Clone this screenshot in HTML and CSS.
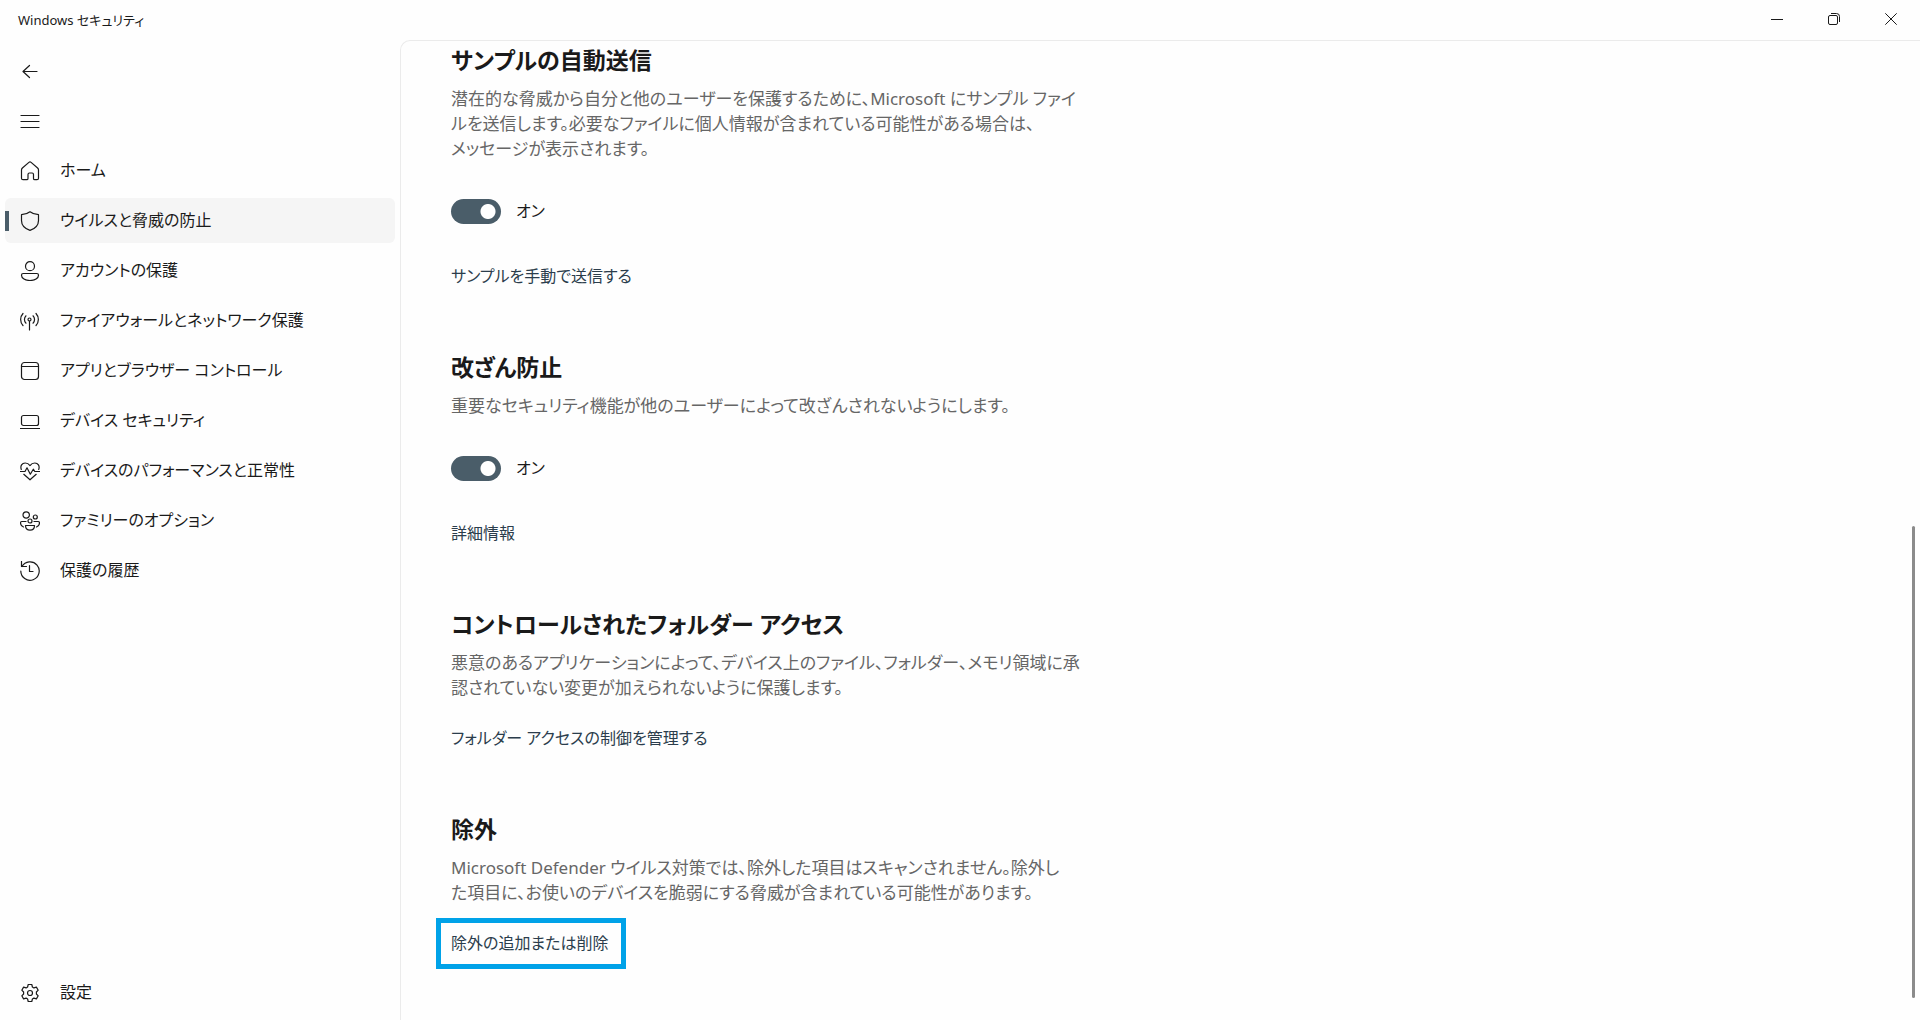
FILE: index.html
```html
<!DOCTYPE html>
<html lang="ja">
<head>
<meta charset="utf-8">
<meta name="viewport" content="width=device-width, initial-scale=1">
<title>Windows セキュリティ</title>
<link rel="stylesheet" href="styles.css">
</head>
<body>
<header class="titlebar">
  <span class="titlebar-name">Windows セキュリティ</span>
  <div class="window-controls">
    <button type="button" class="window-button" aria-label="最小化"><svg viewBox="0 0 12 12" class="window-icon"><path d="M0 6.5h12"/></svg></button>
    <button type="button" class="window-button" aria-label="元に戻す"><svg viewBox="0 0 12 12" class="window-icon"><rect x=".5" y="2.5" width="9" height="9" rx="1.5"/><path d="M3 .5h5.5a3 3 0 0 1 3 3V9"/></svg></button>
    <button type="button" class="window-button" aria-label="閉じる"><svg viewBox="0 0 12 12" class="window-icon"><path d="M.3.3l11.4 11.4M11.7.3.3 11.7"/></svg></button>
  </div>
</header>
<div class="shell">
  <nav class="sidebar">
    <button type="button" class="nav-item" aria-label="戻る"><svg viewBox="0 0 20 20" class="icon"><path d="M17 10.500H3M9.500 4.500 3 10.500l6.500 6"/></svg></button>
    <button type="button" class="nav-item" aria-label="メニュー"><svg viewBox="0 0 20 20" class="icon"><path d="M1 4.500h18M1 10.500h18M1 16.500h18"/></svg></button>
    <a href="#" class="nav-item"><svg viewBox="0 0 20 20" class="icon"><path d="M1.500 9 Q1.500 7.800 2.400 7L8.900 1.400q1.100-.9 2.200 0L17.600 7q.9.800.9 2v8.200q0 1.500-1.500 1.500h-2.200q-1.300 0-1.300-1.300v-4q0-1.400-1.400-1.400H9.400q-1.400 0-1.400 1.400v4q0 1.300-1.300 1.300H3q-1.500 0-1.500-1.500Z"/></svg>ホーム</a>
    <a href="#" class="nav-item is-selected" aria-current="page"><svg viewBox="0 0 20 20" class="icon"><path d="M10 .8C12.400 2.700 15 3.600 18.500 3.700V9.500C18.500 14 15.500 17.500 10 19.400 4.500 17.500 1.500 14 1.500 9.500V3.700C5 3.600 7.600 2.700 10 .8Z"/></svg>ウイルスと脅威の防止</a>
    <a href="#" class="nav-item"><svg viewBox="0 0 20 20" class="icon"><circle cx="10" cy="5.200" r="4.500"/><path d="M3.200 12.500h13.600q1.700 0 1.700 1.700c0 3.200-3.700 5.300-8.500 5.300s-8.500-2.100-8.500-5.300q0-1.700 1.700-1.700Z"/></svg>アカウントの保護</a>
    <a href="#" class="nav-item"><svg viewBox="0 0 20 20" class="icon"><circle cx="9.500" cy="8.500" r="1.500"/><path d="M9.500 10v9M3 2.500a8.800 8.800 0 0 0 0 12M6 4.800a5.200 5.200 0 0 0 0 7.400M16 2.500a8.800 8.800 0 0 1 0 12M13 4.800a5.200 5.200 0 0 1 0 7.400"/></svg>ファイアウォールとネットワーク保護</a>
    <a href="#" class="nav-item"><svg viewBox="0 0 20 20" class="icon"><rect x="1.500" y="1.500" width="17" height="17" rx="3"/><path d="M1.500 5.500h17"/></svg>アプリとブラウザー コントロール</a>
    <a href="#" class="nav-item"><svg viewBox="0 0 20 20" class="icon"><rect x="1.500" y="4.500" width="17" height="10" rx="2"/><path d="M0 17.500h20"/></svg>デバイス セキュリティ</a>
    <a href="#" class="nav-item"><svg viewBox="0 0 20 20" class="icon"><path d="M1.300 8.500C0 5 2 2 5.200 2 7.500 2 9 3.200 10 4.600 11 3.200 12.500 2 14.800 2 18 2 20 5 18.700 8.500M0 10.500h5l2-3.700 3.300 6.400 3-5 1.500 2.300H20M3.800 13.300 10 18.800l6.200-5.500"/></svg>デバイスのパフォーマンスと正常性</a>
    <a href="#" class="nav-item"><svg viewBox="0 0 20 20" class="icon"><circle cx="6.200" cy="4" r="3.200"/><circle cx="15.300" cy="6" r="2"/><circle cx="10" cy="10" r="2"/><path d="M5.500 14.500h9c0 3-1.700 4.700-4.500 4.700s-4.500-1.700-4.500-4.700ZM6 10.500H2Q.5 10.500.5 12c0 2 1 3.200 3 4M14 10.500h4q1.500 0 1.500 1.500c0 2-1 3.200-3 4"/></svg>ファミリーのオプション</a>
    <a href="#" class="nav-item"><svg viewBox="0 0 20 20" class="icon"><path d="M1.500.5v5h5M2 5.500A9.200 9.200 0 1 1 .8 10M9.500 4.500v6H13"/></svg>保護の履歴</a>
    <a href="#" class="nav-item nav-settings"><svg viewBox="0 0 20 20" class="icon"><circle cx="10" cy="10" r="2.500"/><path d="M8.200 1.500h3.600l.6 2.500 1.500.9 2.500-.8 1.800 3.100L16.400 9v2l1.800 1.800-1.800 3.100-2.500-.8-1.500.9-.6 2.500H8.200L7.600 16l-1.500-.9-2.500.8-1.800-3.100L3.600 11V9L1.800 7.200l1.800-3.100 2.500.8L7.600 4Z"/></svg>設定</a>
  </nav>
  <main class="content">
    <section class="section">
      <h2 class="section-title">サンプルの自動送信</h2>
      <p class="section-text">潜在的な脅威から自分と他のユーザーを保護するために、Microsoft にサンプル ファイ<br>ルを送信します。必要なファイルに個人情報が含まれている可能性がある場合は、<br>メッセージが表示されます。</p>
      <label class="toggle"><input type="checkbox" role="switch" class="toggle-input" checked>オン</label>
      <a href="#" class="section-link">サンプルを手動で送信する</a>
    </section>
    <section class="section">
      <h2 class="section-title">改ざん防止</h2>
      <p class="section-text">重要なセキュリティ機能が他のユーザーによって改ざんされないようにします。</p>
      <label class="toggle"><input type="checkbox" role="switch" class="toggle-input" checked>オン</label>
      <a href="#" class="section-link">詳細情報</a>
    </section>
    <section class="section">
      <h2 class="section-title">コントロールされたフォルダー アクセス</h2>
      <p class="section-text">悪意のあるアプリケーションによって、デバイス上のファイル、フォルダー、メモリ領域に承<br>認されていない変更が加えられないように保護します。</p>
      <a href="#" class="section-link">フォルダー アクセスの制御を管理する</a>
    </section>
    <section class="section">
      <h2 class="section-title">除外</h2>
      <p class="section-text">Microsoft Defender ウイルス対策では、除外した項目はスキャンされません。除外し<br>た項目に、お使いのデバイスを脆弱にする脅威が含まれている可能性があります。</p>
      <a href="#" class="section-link is-highlighted">除外の追加または削除</a>
    </section>
    <div class="scroll-thumb"></div>
  </main>
</div>
</body>
</html>
```
FILE: styles.css
```css
* {
  box-sizing: border-box;
}

body {
  margin: 0;
  min-height: 100vh;
  display: flex;
  flex-direction: column;
  background: #fefefe;
  color: #1a1a1a;
  font-family: "Noto Sans", "Noto Sans CJK JP", sans-serif;
  font-size: 16px;
  line-height: 25px;
  font-feature-settings: "palt";
}

button {
  border: 0;
  background: none;
  color: inherit;
  font: inherit;
}

a {
  color: inherit;
  text-decoration: none;
}

.titlebar {
  display: flex;
  justify-content: space-between;
  height: 40px;
  padding: 0 1px 0 18px;
  font-size: 13px;
  line-height: 40px;
}

.window-controls {
  display: flex;
}

.window-button {
  display: grid;
  place-items: center;
  width: 57px;
  height: 38px;
  padding: 0;
}

.window-icon {
  width: 12px;
  height: 12px;
  fill: none;
  stroke: #1a1a1a;
}

.shell {
  flex: 1;
  display: flex;
}

.sidebar {
  display: flex;
  flex-direction: column;
  gap: 5px;
  flex: 0 0 400px;
  padding: 8px 5px 5px;
}

.nav-item {
  display: flex;
  align-items: center;
  gap: 20px;
  height: 45px;
  padding: 0 15px;
  border-radius: 6px;
  white-space: nowrap;
}

.nav-item.is-selected {
  background: linear-gradient(#4a5d69, #4a5d69) 0 50% / 4px 20px no-repeat #f5f5f5;
}

.nav-settings {
  margin-top: auto;
}

.icon {
  flex: none;
  width: 20px;
  height: 20px;
  fill: none;
  stroke: #1a1a1a;
  stroke-width: 1.2;
  stroke-linecap: round;
  stroke-linejoin: round;
}

.content {
  position: relative;
  flex: 1;
  display: flex;
  flex-direction: column;
  gap: 62px;
  padding: 3px 50px 48px;
  border: solid #ebebeb;
  border-width: 1px 0 0 1px;
  border-top-left-radius: 10px;
}

.section {
  display: flex;
  flex-direction: column;
  align-items: flex-start;
}

.section-title {
  margin: 0 0 10px;
  font-size: 23px;
  line-height: 32px;
  font-weight: 600;
}

.section-text {
  margin: 0;
  color: #666;
  font-size: 17px;
  white-space: nowrap;
}

.toggle {
  display: flex;
  align-items: center;
  gap: 15px;
  margin: 38px 0 14px;
}

.toggle-input {
  appearance: none;
  width: 50px;
  height: 25px;
  margin: 0;
  border-radius: 13px;
  background: radial-gradient(circle at 37px 50%, #fff 7px, #4a5d69 8px);
}

.section-link {
  position: relative;
  margin-top: 26px;
  color: #2b3d4c;
}

.section-link.is-highlighted::after {
  content: "";
  position: absolute;
  inset: -13px -18px -13px -15px;
  border: 5px solid #00a2e8;
}

.scroll-thumb {
  position: absolute;
  top: 485px;
  right: 5px;
  bottom: 22px;
  width: 3px;
  border-radius: 2px;
  background: #8b8b8b;
}
```
